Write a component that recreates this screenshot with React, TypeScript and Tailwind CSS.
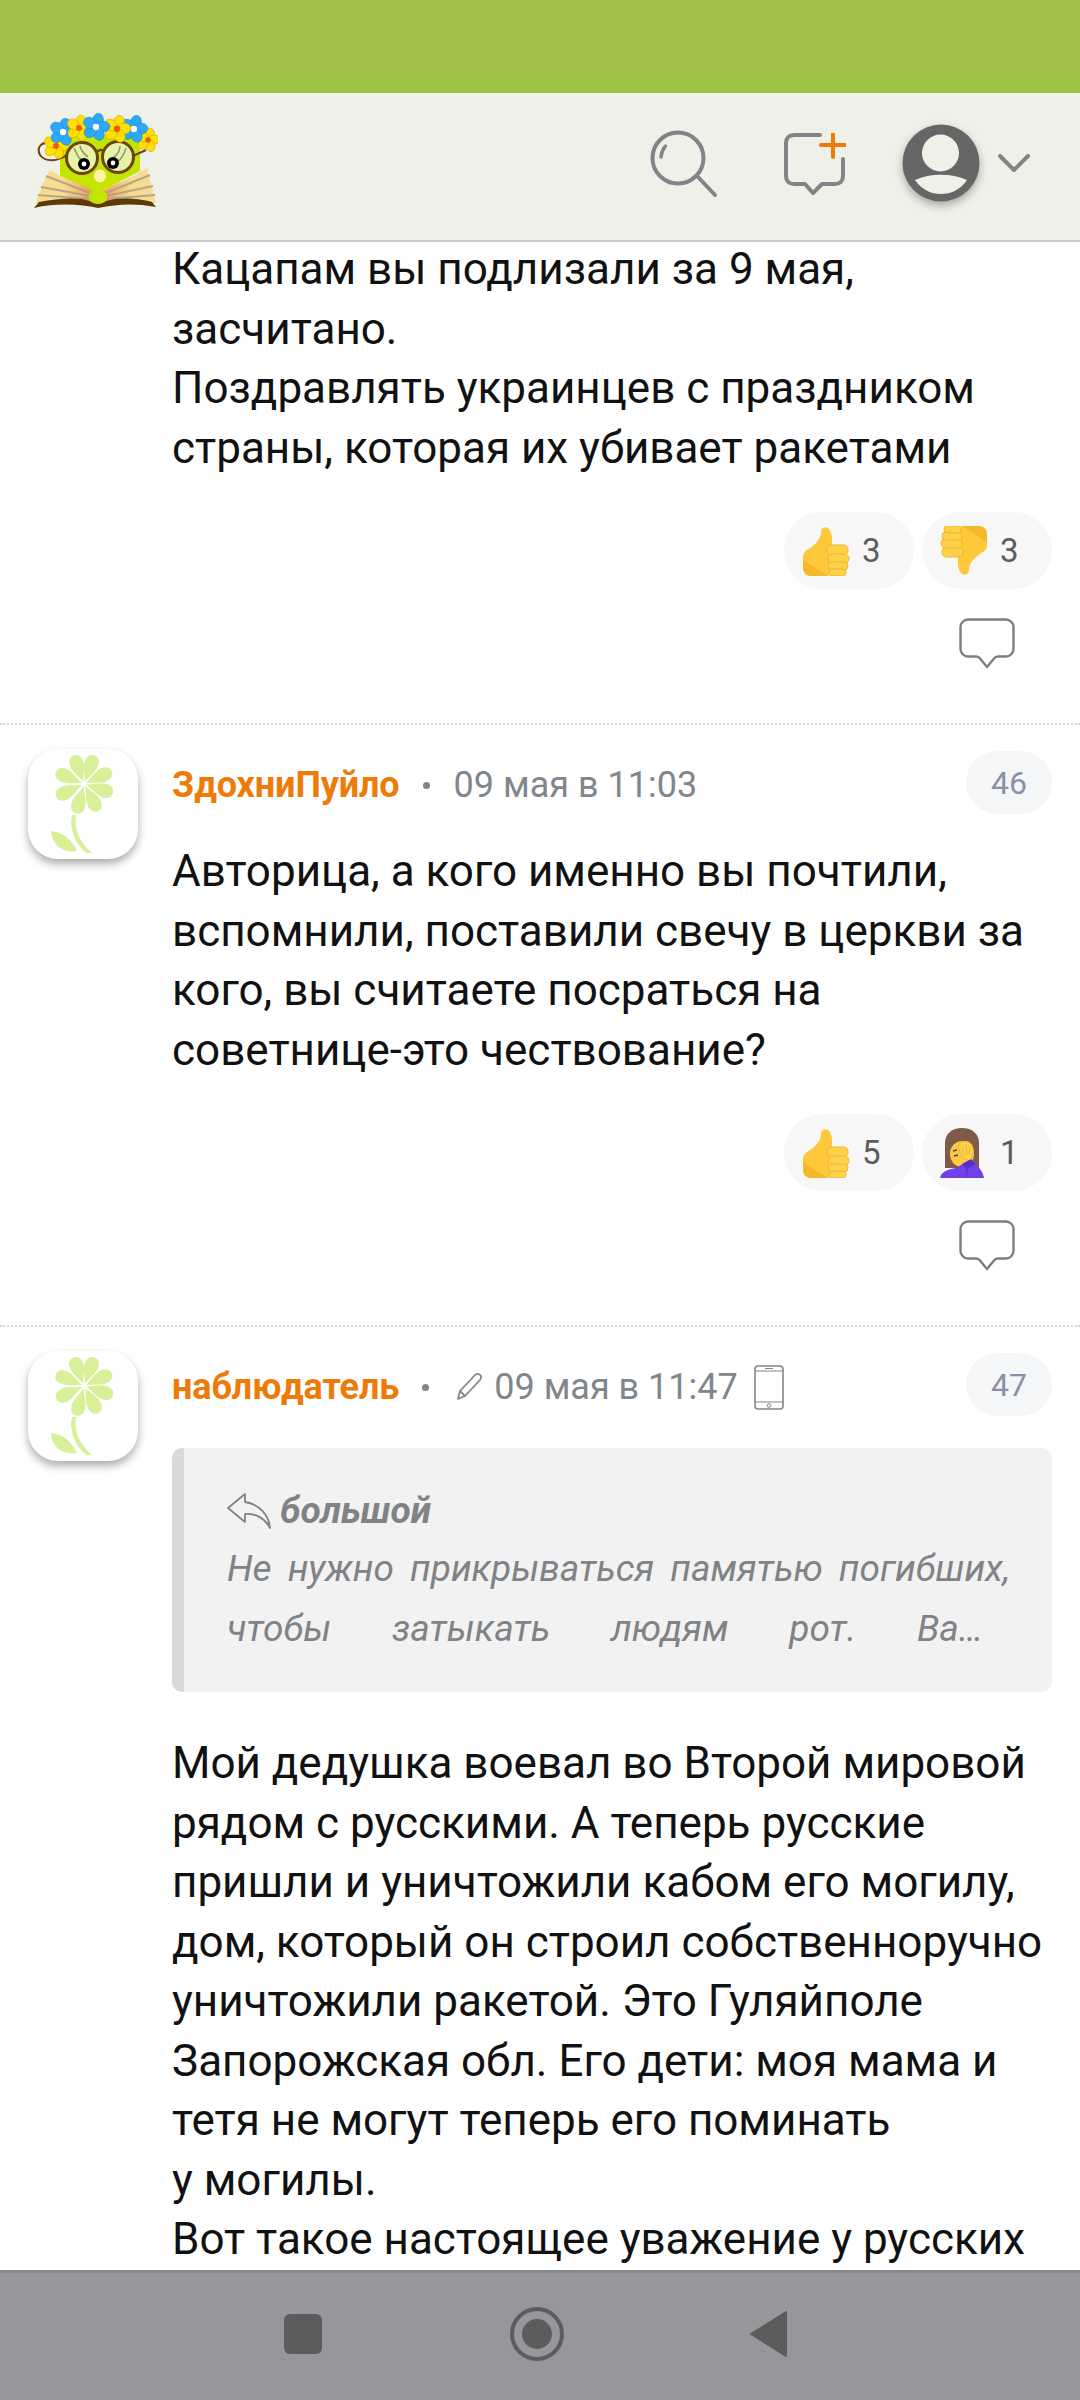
import type { ReactNode } from "react";

const ROBOTO = "font-['Roboto',sans-serif]";

function Logo() {
  const flower = (x: number, y: number, petal: string, mid: string, r: number) => (
    <g>
      {[0, 72, 144, 216, 288].map((a) => (
        <ellipse
          key={a}
          cx={x}
          cy={y - r * 0.95}
          rx={r * 0.72}
          ry={r * 0.9}
          fill={petal}
          stroke={petal === "#ffe000" ? "#d9a800" : "#1c86d8"}
          strokeWidth="0.6"
          transform={`rotate(${a + 15} ${x} ${y})`}
        />
      ))}
      <circle cx={x} cy={y} r={r * 0.42} fill={mid} />
    </g>
  );
  return (
    <svg width="124" height="95" viewBox="0 0 124 95" className="mb-[12px]">
      <defs>
        <linearGradient id="pageL" x1="0" x2="1" y1="0" y2="0">
          <stop offset="0.45" stopColor="#f8dc90" />
          <stop offset="1" stopColor="#f2944a" />
        </linearGradient>
        <linearGradient id="pageR" x1="1" x2="0" y1="0" y2="0">
          <stop offset="0.45" stopColor="#f8dc90" />
          <stop offset="1" stopColor="#f2944a" />
        </linearGradient>
      </defs>
      <path d="M26 22 H106 V58 L64 80 L26 64 Z" fill="#c3e600" />
      {/* book */}
      <path d="M16 57 C30 66 48 70 62 80 V90 H2 C6 78 10 66 16 57 Z" fill="url(#pageL)" />
      <path d="M113 55 C98 66 80 70 66 80 V90 H122 C118 78 116 66 113 55 Z" fill="url(#pageR)" />
      <g stroke="#a8a08a" strokeWidth="2" opacity="0.85">
        <path d="M12 63 L56 80" />
        <path d="M7 74 L56 83" />
        <path d="M4 82 L56 86" />
        <path d="M116 62 L72 80" />
        <path d="M119 73 L72 83" />
        <path d="M121 82 L72 86" />
      </g>
      <path d="M0 95 L5 89 C25 85 45 84 56 88 L64 90 L72 88 C84 84 105 85 118 89 L122 94 C100 90 84 91 64 95 C46 91 22 90 0 95 Z" fill="#5f3a08" />
      <ellipse cx="64" cy="84" rx="9.5" ry="7" fill="#c3e600" />
      <ellipse cx="66" cy="63" rx="6" ry="6.5" fill="#fdf2a8" />
      {/* glasses */}
      <path d="M33 42 C24 48 12 50 6 42 C2 34 8 30 12 30" fill="none" stroke="#6b4410" strokeWidth="2" />
      <path d="M99 43 L112 37" stroke="#6b4410" strokeWidth="2" />
      <circle cx="48" cy="45" r="15.5" fill="#e8f2a8" stroke="#6b4410" strokeWidth="3" />
      <circle cx="84" cy="44" r="15.5" fill="#e8f2a8" stroke="#6b4410" strokeWidth="3" />
      <path d="M63 39 C66 36 68 36 70 39" fill="none" stroke="#6b4410" strokeWidth="2.5" />
      <path d="M40 35 C43 41 44 46 49 48 M46 33 C47 38 50 41 54 44" fill="none" stroke="#8c9a70" strokeWidth="1.6" />
      <path d="M92 35 C90 41 88 46 84 48 M86 33 C86 38 84 41 80 44" fill="none" stroke="#8c9a70" strokeWidth="1.6" />
      <circle cx="50" cy="51" r="6" fill="#000" />
      <circle cx="50" cy="51" r="2.4" fill="#fff" />
      <circle cx="79" cy="50" r="6" fill="#000" />
      <circle cx="79" cy="50" r="2.4" fill="#fff" />
      {/* crown */}
      {flower(22, 33, "#ffe000", "#ee5a10", 7)}
      {flower(114, 27, "#ffe000", "#ee5a10", 6.5)}
      {flower(29, 19, "#2ea8f8", "#ffffff", 7.5)}
      {flower(45, 15, "#ffe000", "#ee5a10", 7)}
      {flower(100, 16, "#2ea8f8", "#ffffff", 7.5)}
      {flower(83, 16, "#ffe000", "#ee5a10", 7.5)}
      {flower(62, 14, "#2ea8f8", "#ffffff", 7.5)}
    </svg>
  );
}

function FlowerAvatar() {
  return (
    <div className="w-[110px] h-[110px] flex-none rounded-[30px] bg-white shadow-[0_5px_9px_rgba(0,0,0,0.32)] flex">
      <svg width="110" height="110" viewBox="0 0 110 110">
        <g fill="#d8f098">
          {[-20, 20, 65, 108, 152, 195, 245, 293].map((a) => (
            <path
              key={a}
              d="M56 33 C54.5 27 49 20 49 13 C49 7.5 52 4.5 56 4.5 C60 4.5 63 7.5 63 13 C63 20 57.5 27 56 33 Z"
              transform={`rotate(${a} 56 35)`}
            />
          ))}
          <path d="M44 66 L48 66 C46 78 50 92 64 104 L58 104 C46 94 41 78 44 66 Z" />
          <path d="M23 82 C35 83 44 91 49 102 C36 104 24 98 23 82 Z" />
        </g>
      </svg>
    </div>
  );
}

function ThumbUp({ flip }: { flip?: boolean }) {
  return (
    <svg width="48" height="50" viewBox="0 0 48 50" style={flip ? { transform: "rotate(180deg)" } : undefined}>
      <path
        d="M27 3 C24 0 19 1 19 6 C19 12 15 18 5 24 C2 26 1 28 1 31 V42 C1 47 5 50 10 50 H26 C30 50 30 30 30 22 C30 14 31 8 27 3 Z"
        fill="#fdc93a"
      />
      <path d="M1 34 C8 38 16 44 26 50 H10 C5 50 1 47 1 42 Z" fill="#f5b82a" />
      <rect x="25" y="19" width="21" height="10" rx="4.5" fill="#fdd24a" stroke="#f0b52c" strokeWidth="1" />
      <rect x="26" y="28" width="21" height="9.5" rx="4.5" fill="#fdd24a" stroke="#f0b52c" strokeWidth="1" />
      <rect x="26" y="36" width="20" height="8" rx="4" fill="#fdd24a" stroke="#f0b52c" strokeWidth="1" />
      <rect x="27" y="43" width="17" height="7" rx="3.5" fill="#fdd24a" stroke="#f0b52c" strokeWidth="1" />
    </svg>
  );
}

function Facepalm() {
  return (
    <svg width="44" height="50" viewBox="0 0 44 50">
      <path d="M5 40 V15 C5 6 12 0 22 0 C32 0 39 6 39 15 V40 Z" fill="#7d5a4a" />
      <ellipse cx="22" cy="26" rx="12" ry="13" fill="#fdca47" />
      <path d="M13 23 L17 22 M14 28 L18 27" stroke="#5a4030" strokeWidth="1.3" />
      <path d="M19 16 C24 11 32 13 33 20 C34 26 32 30 30 33 L23 30 C20 26 18 21 19 16 Z" fill="#fdd24a" stroke="#e8a92c" strokeWidth="0.8" />
      <path d="M22 20 L24 28 M26 17 L27 27 M30 18 L29 27" stroke="#e8a92c" strokeWidth="0.8" />
      <path d="M0 50 C1 44 8 41 16 40 L21 37 L30 32 C37 36 43 43 44 50 Z" fill="#7040e8" />
      <path d="M22 36 L31 31 L35 36 L27 42 Z" fill="#5c30c8" />
      <path d="M27 42 L26 50" stroke="#5c30c8" strokeWidth="1" />
    </svg>
  );
}

function Pill({ icon, count }: { icon: ReactNode; count: string }) {
  return (
    <div className="w-[130px] h-[77px] rounded-full bg-[#f7f7f7] flex items-center pl-[18px]">
      <span className="w-[48px] flex-none flex">{icon}</span>
      <span className="ml-[12px] text-[33px] text-[#5a5d60]">{count}</span>
    </div>
  );
}

function ReplyIcon() {
  return (
    <svg width="56" height="51" viewBox="0 0 56 51" fill="none">
      <path
        d="M9 1.5 H47 C51 1.5 54.5 5 54.5 9 V31 C54.5 35 51 38.5 47 38.5 H39 C37 38.5 36 39 35 40.5 L28 49 L21 40.5 C20 39 19 38.5 17 38.5 H9 C5 38.5 1.5 35 1.5 31 V9 C1.5 5 5 1.5 9 1.5 Z"
        stroke="#7b7f82"
        strokeWidth="2.4"
        strokeLinejoin="round"
      />
    </svg>
  );
}

function Reactions({ left, right }: { left: ReactNode; right: ReactNode }) {
  return (
    <div className="flex flex-col items-end">
      <div className="flex gap-[8px]">
        {left}
        {right}
      </div>
      <div className="mt-[29px] mr-[37px] flex">
        <ReplyIcon />
      </div>
    </div>
  );
}

function Meta({ name, num, children }: { name: string; num: string; children: ReactNode }) {
  return (
    <div className="flex h-[63px] mt-[2px]">
      <div className="flex-1 flex items-center pt-[5px] min-w-0">
        <span className="text-[#ee7a08] text-[36px] font-bold tracking-[-0.1px]">{name}</span>
        <span className="w-[7px] h-[7px] rounded-full bg-[#80868b] ml-[23px] mr-[24px]" />
        <div className="flex items-center text-[36px] text-[#80868b]">{children}</div>
      </div>
      <span className="w-[86px] h-[63px] rounded-full bg-[#f5f6f8] text-[#8a90a8] text-[32px] flex items-center justify-center">{num}</span>
    </div>
  );
}

function Comment({ name, num, meta, children }: { name: string; num: string; meta: ReactNode; children: ReactNode }) {
  return (
    <div className="flex border-t-2 border-dotted border-[#d8d8d8] pt-[24px] pl-[28px] pr-[28px]">
      <div className="w-[144px] flex-none">
        <FlowerAvatar />
      </div>
      <div className="flex-1 min-w-0">
        <Meta name={name} num={num}>
          {meta}
        </Meta>
        {children}
      </div>
    </div>
  );
}

const bodyText = "text-[44px] leading-[59.5px] text-[#111111]";

export default function App() {
  return (
    <div className={`${ROBOTO} h-[2400px] w-[1080px] flex flex-col overflow-hidden bg-white`}>
      {/* status bar */}
      <div className="h-[93px] flex-none bg-[#9fc146]" />

      {/* header */}
      <div className="h-[149px] flex-none bg-[#eff0e8] border-b-2 border-[#cdcdcd] flex items-center pl-[34px] pr-[50px]">
        <Logo />
        <div className="flex-1" />
        <svg width="68" height="68" viewBox="0 0 68 68" fill="none" className="mb-[5px]">
          <circle cx="28" cy="28" r="25.5" stroke="#808487" strokeWidth="4" />
          <path d="M48 47 L65 65" stroke="#808487" strokeWidth="4" strokeLinecap="round" />
          <path d="M11 27 C11.5 22 13 19 15.5 16" stroke="#808487" strokeWidth="3.5" strokeLinecap="round" />
        </svg>
        <svg width="62" height="62" viewBox="0 0 62 62" fill="none" className="ml-[66px] mb-[5px]">
          <path d="M36 2 H10 C5 2 2 5 2 10 V43 C2 48 5 51 10 51 H21 L29 60 L38 51 H51 C56 51 59 48 59 43 V26" stroke="#808487" strokeWidth="4" strokeLinecap="round" strokeLinejoin="round" />
          <path d="M49 0 V24 M37 12 H61" stroke="#ee7a08" strokeWidth="4" strokeLinecap="round" />
        </svg>
        <svg width="78" height="78" viewBox="0 0 78 78" className="ml-[56px] mb-[8px] drop-shadow-[0_4px_4px_rgba(0,0,0,0.3)]">
          <circle cx="39" cy="39" r="38.5" fill="#666666" />
          <circle cx="38.5" cy="29" r="18.5" fill="#eff0e8" />
          <path d="M13 56 C28 49 50 49 65 56 C58 66 49 70 39 70 C29 70 20 66 13 56 Z" fill="#eff0e8" />
        </svg>
        <svg width="32" height="18" viewBox="0 0 32 18" fill="none" className="ml-[18px] mb-[8px]">
          <path d="M2 2 L16 16 L30 2" stroke="#808487" strokeWidth="4" strokeLinecap="round" strokeLinejoin="round" />
        </svg>
      </div>

      {/* comments */}
      <div className="flex-1 min-h-0 overflow-hidden">
        <div className="pl-[172px] pr-[28px] mt-[-2px]">
          <p className={bodyText}>
            Кацапам вы подлизали за 9 мая,
            <br />
            засчитано.
            <br />
            Поздравлять украинцев с праздником
            <br />
            страны, которая их убивает ракетами
          </p>
          <div className="mt-[34px] pb-[54px]">
            <Reactions
              left={<Pill icon={<ThumbUp />} count="3" />}
              right={<Pill icon={<ThumbUp flip />} count="3" />}
            />
          </div>
        </div>

        <Comment name="ЗдохниПуйло" num="46" meta={<span>09 мая в 11:03</span>}>
          <p className={`${bodyText} mt-[28px]`}>
            Авторица, а кого именно вы почтили, вспомнили, поставили свечу в церкви за кого, вы считаете посраться на советнице-это чествование?
          </p>
          <div className="mt-[34px] pb-[54px]">
            <Reactions
              left={<Pill icon={<ThumbUp />} count="5" />}
              right={<Pill icon={<Facepalm />} count="1" />}
            />
          </div>
        </Comment>

        <Comment
          name="наблюдатель"
          num="47"
          meta={
            <>
              <svg width="28" height="30" viewBox="0 0 28 30" fill="none" className="mr-[11px] ml-[2px]">
                <path d="M3 27 L5 19 L20 3 C22 1.5 24 1.5 25 3 C26.5 4.5 26.5 6 25 8 L10 24 Z M5 19 L10 24" stroke="#80868b" strokeWidth="1.8" strokeLinejoin="round" />
              </svg>
              <span>09 мая в 11:47</span>
              <svg width="30" height="45" viewBox="0 0 30 45" fill="none" className="ml-[16px]">
                <rect x="1" y="1" width="28" height="43" rx="3" stroke="#80868b" strokeWidth="1.6" />
                <path d="M1 6 H29 M1 37 H29 M11 3.5 H19" stroke="#80868b" strokeWidth="1.2" />
                <circle cx="15" cy="40.5" r="1.8" stroke="#80868b" strokeWidth="1" />
              </svg>
            </>
          }
        >
          <div className="mt-[32px] h-[244px] w-full rounded-[10px] bg-[#f2f2f2] border-l-[12px] border-[#d9d9d9] pl-[43px] pr-[42px] pt-[40px] italic text-[#808285] text-[37px]">
            <div className="flex items-center h-[46px] font-bold">
              <svg width="44" height="36" viewBox="0 0 44 36" fill="none" className="mr-[9px]">
                <path d="M18 1 L1 15 L18 29 V21 C28 20 38 25 43 35 C42 22 32 11 18 9 Z" stroke="#808487" strokeWidth="1.8" strokeLinejoin="round" />
              </svg>
              большой
            </div>
            <p className="mt-[5px] leading-[60px] [text-align-last:justify]">Не нужно прикрываться памятью погибших,</p>
            <p className="leading-[60px] mr-[27px] [text-align-last:justify]">чтобы затыкать людям рот. Ва…</p>
          </div>
          <p className={`${bodyText} mt-[42px]`}>
            Мой дедушка воевал во Второй мировой рядом с русскими. А теперь русские пришли и уничтожили кабом его могилу, дом, который он строил собственноручно уничтожили ракетой. Это Гуляйполе Запорожская обл. Его дети: моя мама и тетя не могут теперь его поминать
            <br />
            у могилы.
            <br />
            Вот такое настоящее уважение у русских
          </p>
        </Comment>
      </div>

      {/* android nav */}
      <div className="h-[130px] flex-none bg-[#97969b] border-t-[3px] border-[#88888c] flex items-center justify-center pb-[6px] pr-[8px]">
        <span className="w-[38px] h-[40px] rounded-[6px] bg-[#5c5c5c]" />
        <span className="ml-[188px] w-[54px] h-[54px] rounded-full border-[4px] border-[#5c5c5c] flex items-center justify-center">
          <span className="w-[30px] h-[30px] rounded-full bg-[#5c5c5c]" />
        </span>
        <svg width="38" height="46" viewBox="0 0 38 46" className="ml-[186px]">
          <path d="M36 1 V45 L1 23 Z" fill="#5c5c5c" stroke="#5c5c5c" strokeWidth="2" strokeLinejoin="round" />
        </svg>
      </div>
    </div>
  );
}
